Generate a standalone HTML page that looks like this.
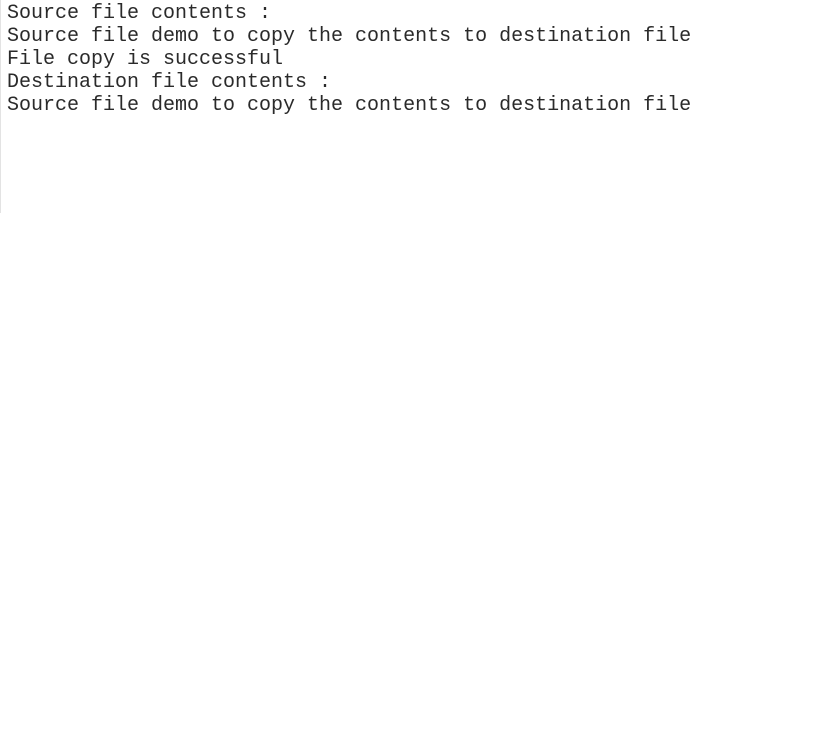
<!DOCTYPE html>
<html><head><meta charset="utf-8"><style>
html,body{margin:0;padding:0;background:#fff;width:819px;height:748px;overflow:hidden}
.b{position:absolute;left:0;top:0;width:1px;height:213px;background:#e3e3e3}
pre{position:absolute;left:7px;top:2px;margin:0;font-family:"Courier New","Nimbus Mono PS","FreeMono","Liberation Mono",monospace;font-size:20px;line-height:23px;color:#2a2a2a}
</style></head><body>
<div class="b"></div>
<pre>Source file contents :
Source file demo to copy the contents to destination file
File copy is successful
Destination file contents :
Source file demo to copy the contents to destination file</pre>
</body></html>
